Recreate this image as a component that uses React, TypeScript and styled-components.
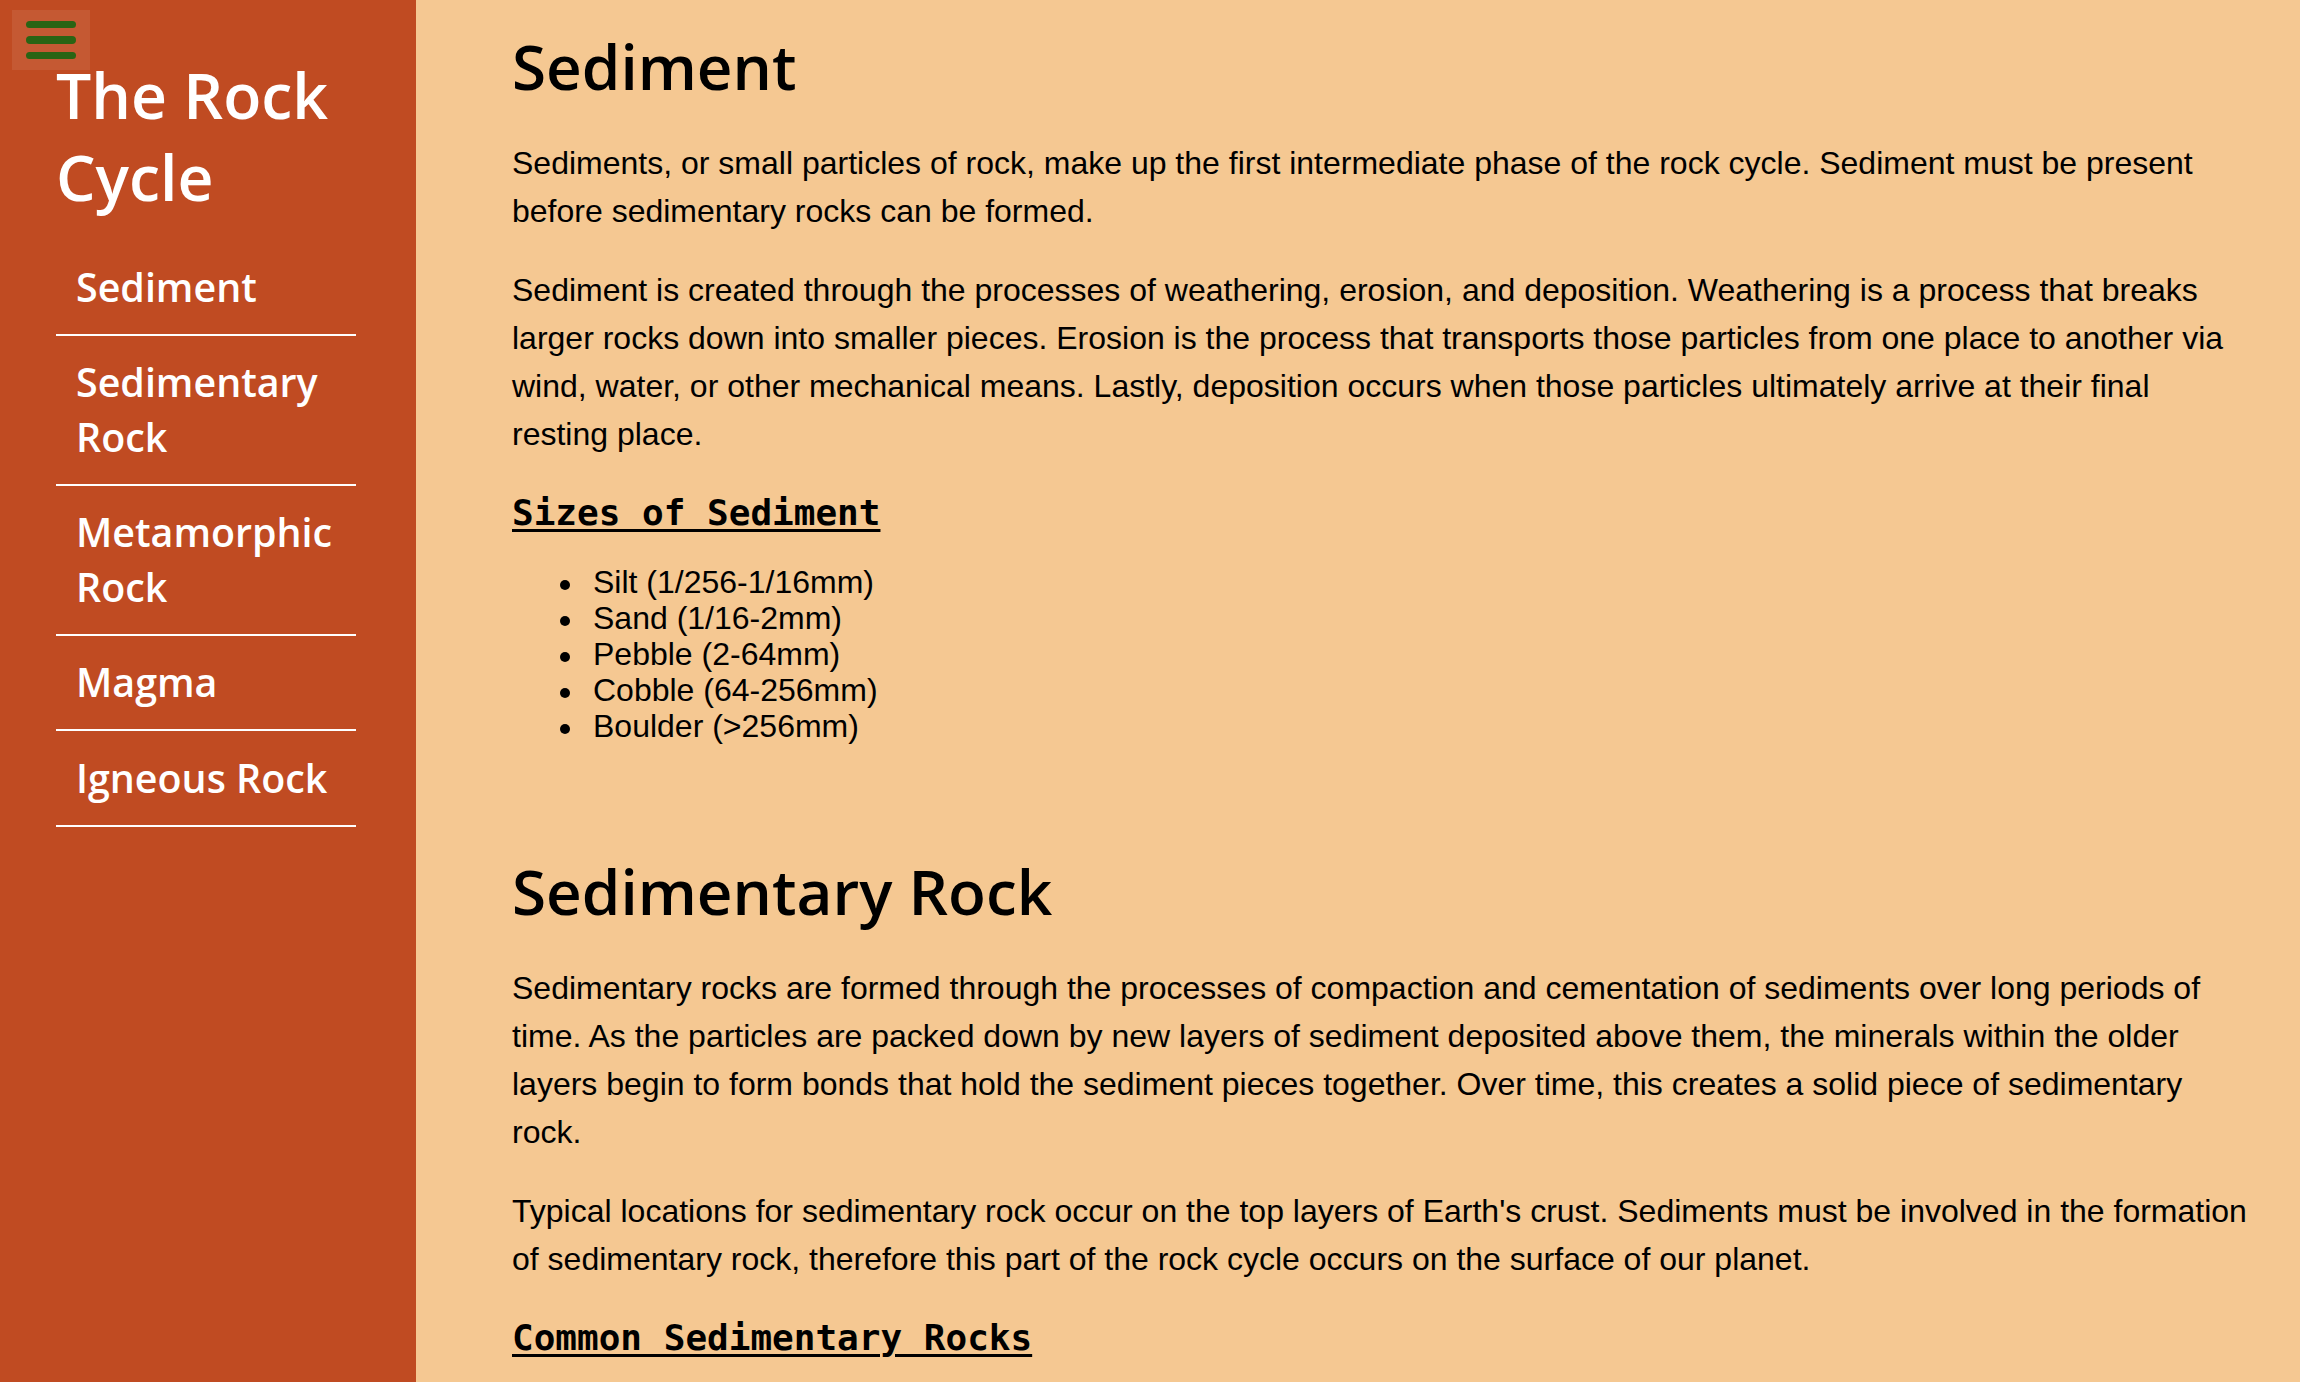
import React from "react";
import styled, { createGlobalStyle } from "styled-components";

const GlobalStyle = createGlobalStyle`
  html, body {
    margin: 0;
    padding: 0;
    background: #f5c892;
  }
  * { box-sizing: border-box; }
`;

const Layout = styled.div`
  display: grid;
  grid-template-columns: 416px 1fr;
  min-height: 100vh;
  background: #f5c892;
`;

const Sidebar = styled.aside`
  position: sticky;
  top: 0;
  height: 100vh;
  background: #c04b22;
  padding: 54px 0 0 56px;
  font-family: "Open Sans", "Liberation Sans", sans-serif;
  color: #ffffff;
`;

const MenuButton = styled.button`
  position: absolute;
  top: 10px;
  left: 12px;
  width: 78px;
  height: 60px;
  padding: 11px 14px;
  border: none;
  background: rgba(255, 255, 255, 0.08);
  display: flex;
  flex-direction: column;
  gap: 8px;
  cursor: pointer;
`;

const MenuBar = styled.span`
  display: block;
  width: 50px;
  height: 8px;
  border-radius: 4px;
  background: #2a6414;
`;

const Title = styled.h1`
  margin: 0 0 22px;
  font-size: 62.5px;
  line-height: 82px;
  font-weight: 600;
  width: 320px;
`;

const NavList = styled.ul`
  list-style: none;
  margin: 0;
  padding: 0;
  width: 300px;
`;

const NavItem = styled.li`
  border-bottom: 2px solid #ffffff;
`;

const NavLink = styled.a`
  display: block;
  padding: 19.5px 19px 19.5px 20px;
  font-size: 39.4px;
  line-height: 54.5px;
  font-weight: 600;
  color: #ffffff;
  text-decoration: none;
`;

const Main = styled.main`
  padding: 29px 50px 60px 96px;
  color: #000000;
`;

const Section = styled.section`
  display: flex;
  flex-direction: column;
  align-items: flex-start;
  margin-bottom: 110px;
`;

const Heading = styled.h2`
  margin: 0 0 36px;
  font-family: "Open Sans", "Liberation Sans", sans-serif;
  font-size: 62px;
  line-height: 74px;
  font-weight: 600;
`;

const Paragraph = styled.p`
  margin: 0 0 31px;
  font-family: "Liberation Sans", Arial, sans-serif;
  font-size: 32px;
  line-height: 48px;
`;

const SubHeading = styled.h3`
  margin: 3px 0 29.5px;
  font-family: "DejaVu Sans Mono", "Liberation Mono", monospace;
  font-size: 36px;
  line-height: 42px;
  font-weight: 700;
  text-decoration: underline;
  text-decoration-thickness: 3px;
  text-underline-offset: 4px;
`;

const BulletList = styled.ul`
  margin: 0;
  padding-left: 81px;
  list-style: none;
  font-family: "Liberation Sans", Arial, sans-serif;
  font-size: 32px;
  line-height: 36px;
`;

const BulletItem = styled.li`
  position: relative;

  &::before {
    content: "";
    position: absolute;
    left: -33px;
    top: 16px;
    width: 10px;
    height: 10px;
    border-radius: 50%;
    background: #000000;
  }
`;

const navItems = [
  "Sediment",
  "Sedimentary Rock",
  "Metamorphic Rock",
  "Magma",
  "Igneous Rock",
];

const sizes = [
  "Silt (1/256-1/16mm)",
  "Sand (1/16-2mm)",
  "Pebble (2-64mm)",
  "Cobble (64-256mm)",
  "Boulder (>256mm)",
];

const rocks = ["Sandstone", "Shale", "Limestone", "Conglomerate", "Breccia"];

export default function App() {
  return (
    <>
      <GlobalStyle />
      <Layout>
        <Sidebar>
          <MenuButton aria-label="Toggle menu">
            <MenuBar />
            <MenuBar />
            <MenuBar />
          </MenuButton>
          <Title>The Rock Cycle</Title>
          <nav>
            <NavList>
              {navItems.map((item) => (
                <NavItem key={item}>
                  <NavLink href={`#${item.toLowerCase().replace(/ /g, "-")}`}>
                    {item}
                  </NavLink>
                </NavItem>
              ))}
            </NavList>
          </nav>
        </Sidebar>
        <Main>
          <Section id="sediment">
            <Heading>Sediment</Heading>
            <Paragraph>
              Sediments, or small particles of rock, make up the first
              intermediate phase of the rock cycle. Sediment must be present
              before sedimentary rocks can be formed.
            </Paragraph>
            <Paragraph>
              Sediment is created through the processes of weathering, erosion,
              and deposition. Weathering is a process that breaks larger rocks
              down into smaller pieces. Erosion is the process that transports
              those particles from one place to another via wind, water, or
              other mechanical means. Lastly, deposition occurs when those
              particles ultimately arrive at their final resting place.
            </Paragraph>
            <SubHeading>Sizes of Sediment</SubHeading>
            <BulletList>
              {sizes.map((s) => (
                <BulletItem key={s}>{s}</BulletItem>
              ))}
            </BulletList>
          </Section>
          <Section id="sedimentary-rock">
            <Heading>Sedimentary Rock</Heading>
            <Paragraph>
              Sedimentary rocks are formed through the processes of compaction
              and cementation of sediments over long periods of time. As the
              particles are packed down by new layers of sediment deposited
              above them, the minerals within the older layers begin to form
              bonds that hold the sediment pieces together. Over time, this
              creates a solid piece of sedimentary rock.
            </Paragraph>
            <Paragraph>
              Typical locations for sedimentary rock occur on the top layers of
              Earth's crust. Sediments must be involved in the formation of
              sedimentary rock, therefore this part of the rock cycle occurs on
              the surface of our planet.
            </Paragraph>
            <SubHeading>Common Sedimentary Rocks</SubHeading>
            <BulletList>
              {rocks.map((r) => (
                <BulletItem key={r}>{r}</BulletItem>
              ))}
            </BulletList>
          </Section>
        </Main>
      </Layout>
    </>
  );
}
